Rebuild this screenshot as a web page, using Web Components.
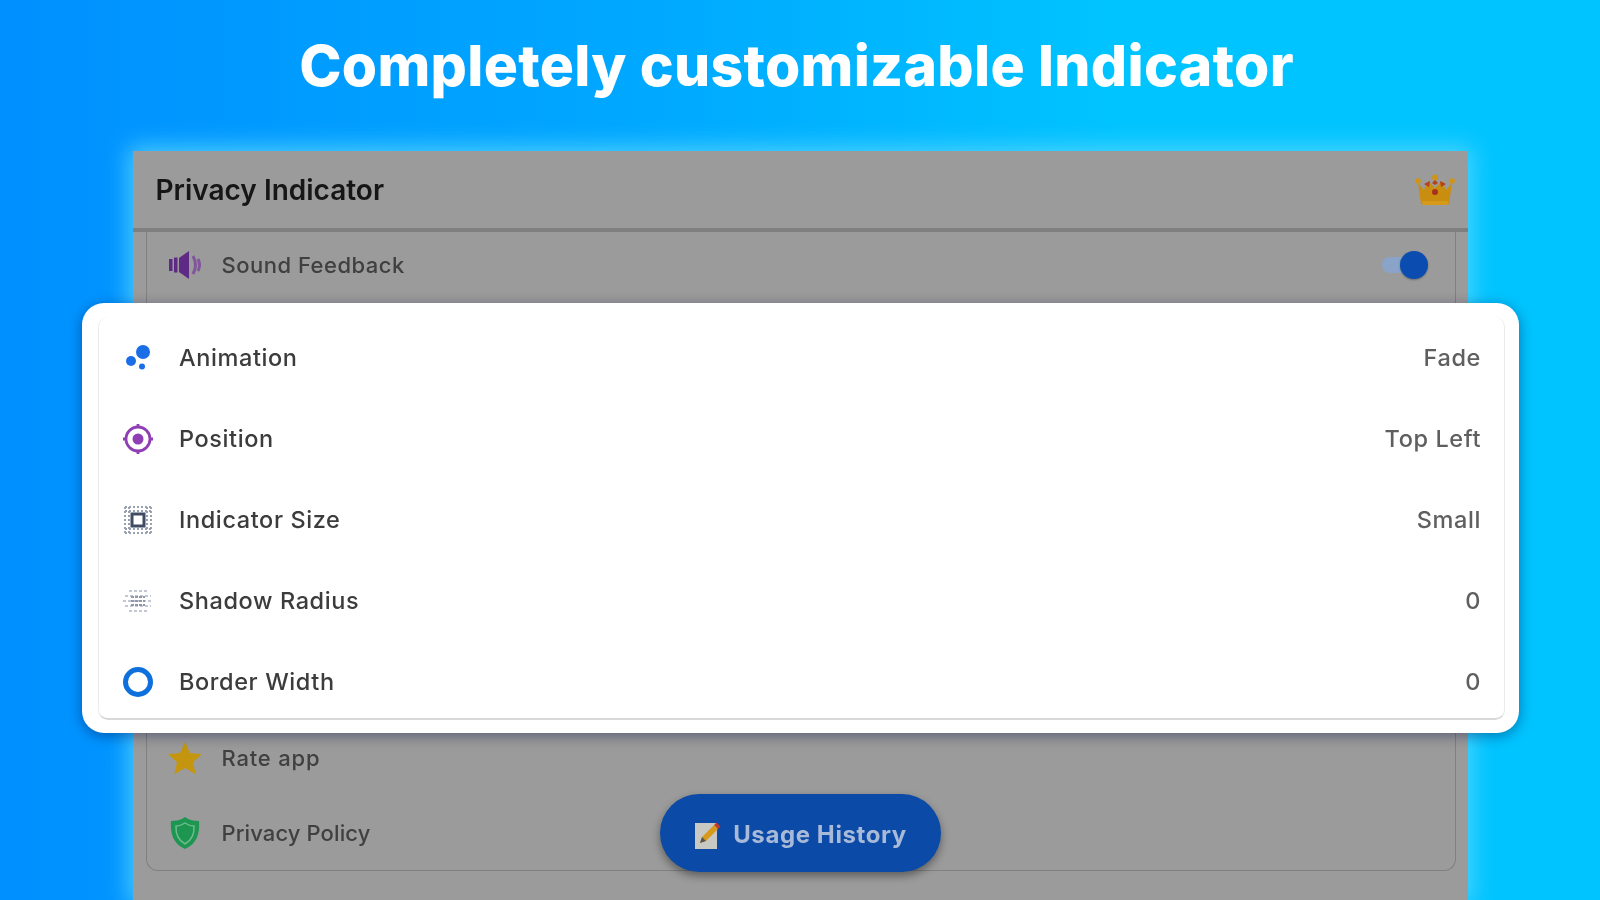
<!DOCTYPE html>
<html lang="en"><head><meta charset="utf-8"><title>Privacy Indicator</title>
<style>html,body{margin:0;padding:0;width:1600px;height:900px;overflow:hidden}</style></head>
<body>
<app-stage>
  <span slot="title">Completely customizable Indicator</span>
  <app-panel slot="panel">
    <span slot="name">Privacy Indicator</span>
    <svg slot="crown" width="40" height="32" viewBox="0 0 40 32"><path d="M3 9l6 7 4-9 7 7 7-7 4 9 6-7-3 21H6z" fill="#c98d10"/><path d="M7 27h26l-.6 4H7.600z" fill="#d79a18"/><circle cx="3" cy="7" r="2.800" fill="#cf9418"/><circle cx="37" cy="7" r="2.800" fill="#cf9418"/><circle cx="20" cy="3.500" r="3" fill="#cf9418"/><path d="M9 10l6-3-1 6zM31 10l-6-3 1 6zM17 9l3-3 3 3-3 2z" fill="#b5401c"/><circle cx="20" cy="18" r="3" fill="#a8301c"/></svg>
    <list-row label="Sound Feedback" style="--row-h:66px;--end:27px">
      <svg slot="icon" width="36" height="30" viewBox="0 0 36 30"><rect x="2" y="9" width="3.500" height="12" fill="#5f2a85"/><rect x="7" y="7.500" width="3.500" height="15" fill="#5f2a85"/><path d="M12 8l10-7v28l-10-7z" fill="#5f2a85"/><path d="M26 6q5 9 0 18M31 9q3 6 0 12" fill="none" stroke="#82569c" stroke-width="3"/></svg>
      <toggle-switch slot="end"></toggle-switch>
    </list-row>
    <row-gap></row-gap>
    <list-row label="Rate app" style="--ls:.8px">
      <svg slot="icon" width="34" height="34" viewBox="0 0 34 34"><path d="M17 1l5 11 12 1.200-9 8 2.700 12L17 27l-10.700 6.200L9 21.200l-9-8L12 12z" fill="#c4960f"/></svg>
    </list-row>
    <list-row label="Privacy Policy" style="--ls:.1px">
      <svg slot="icon" width="32" height="34" viewBox="0 0 32 34"><path d="M16 1c4 3 9 4 14 4 1 12-2 23-14 28C4 28 1 17 2 5c5 0 10-1 14-4z" fill="#1c9650"/><path d="M16 7c3 2 6 3 9 3 .5 8-2 14-9 18-7-4-9.500-10-9-18 3 0 6-1 9-3z" fill="none" stroke="#6fbb8e" stroke-width="1.500"/></svg>
    </list-row>
  </app-panel>
  <settings-popup slot="popup">
    <setting-row label="Animation" value="Fade">
      <svg slot="icon" width="32" height="32" viewBox="0 0 32 32"><circle cx="21" cy="10" r="7" fill="#1a6fe8"/><circle cx="9" cy="19" r="5" fill="#1a6fe8"/><circle cx="20" cy="24.500" r="3" fill="#1a6fe8"/></svg>
    </setting-row>
    <setting-row label="Position" value="Top Left">
      <svg slot="icon" width="32" height="32" viewBox="0 0 32 32"><circle cx="16" cy="16" r="12" fill="none" stroke="#8e3fb4" stroke-width="2.800"/><circle cx="16" cy="16" r="5.500" fill="#8e3fb4"/><path d="M16 1v4M16 27v4M1 16h4M27 16h4" stroke="#8e3fb4" stroke-width="2.800"/></svg>
    </setting-row>
    <setting-row label="Indicator Size" value="Small">
      <svg slot="icon" width="32" height="32" viewBox="0 0 32 32" style="filter:blur(.6px)"><path d="M3 3h26M3 7h26M3 25h26M3 29h26M3 3v26M7 3v26M25 3v26M29 3v26" stroke="#98a1b2" stroke-width="2" stroke-dasharray="2 2"/><rect x="10" y="10" width="12" height="12" fill="#fff" stroke="#414c62" stroke-width="3"/></svg>
    </setting-row>
    <setting-row label="Shadow Radius" value="0">
      <svg slot="icon" width="32" height="32" viewBox="0 0 32 32" style="filter:blur(.6px)"><path d="M7 6h18M3 11h26M1 16h30M3 21h26M7 26h18" stroke="#c3c8d4" stroke-width="1.800" stroke-dasharray="3 2"/><path d="M9 12h14M9 16h14M9 20h14" stroke="#8f98ab" stroke-width="2" stroke-dasharray="3 1"/></svg>
    </setting-row>
    <setting-row label="Border Width" value="0">
      <svg slot="icon" width="32" height="32" viewBox="0 0 32 32"><circle cx="16" cy="16" r="12.500" fill="none" stroke="#0f6fdc" stroke-width="5"/></svg>
    </setting-row>
  </settings-popup>
  <fab-button slot="fab">
    <svg slot="icon" width="28" height="30" viewBox="0 0 28 30"><rect x="1" y="3" width="22" height="26" fill="#c9c9c4"/><path d="M6 23l2-6L20 5l4 4-12 12z" fill="#d99a1c"/><path d="M20 5l2.500-2.500 4 4L24 9z" fill="#c23a2a"/><path d="M6 23l2-6 4 4z" fill="#555"/></svg>
    <span>Usage History</span>
  </fab-button>
</app-stage>
<script>
function def(name, html){
  customElements.define(name, class extends HTMLElement{
    static get observedAttributes(){return ['label','value']}
    constructor(){super();const r=this.attachShadow({mode:'open'});const t=document.createElement('template');t.innerHTML=html;r.appendChild(t.content.cloneNode(true));}
    connectedCallback(){this.sync()}
    attributeChangedCallback(){this.sync()}
    sync(){for(const a of ['label','value']){const n=this.shadowRoot.querySelector('.'+a);if(n)n.textContent=this.getAttribute(a)||''}}
  });
}
def('app-stage',`<style>
:host{display:flex;flex-direction:column;align-items:center;position:relative;width:1600px;height:900px;overflow:hidden;
background:linear-gradient(90deg,#0090ff 0%,#00a8ff 40%,#00c4ff 70%,#00c4ff 100%);font-family:"Inter","Noto Sans",sans-serif}
h1{margin:0;height:151px;box-sizing:border-box;padding:26px 7px 0 0;font:800 57px/80px "Inter",sans-serif;color:#fff;letter-spacing:.3px;white-space:nowrap;filter:blur(.6px)}
.panel{display:flex;flex:1;width:1335px;min-height:0;box-shadow:0 0 22px 4px rgba(90,215,255,.85)}
.popup{position:absolute;left:82px;top:303px}
.fab{position:absolute;left:660px;top:794px}
</style><h1><slot name="title"></slot></h1><div class="panel"><slot name="panel"></slot></div>
<div class="popup"><slot name="popup"></slot></div><div class="fab"><slot name="fab"></slot></div>`);
def('app-panel',`<style>
:host{display:flex;flex-direction:column;flex:1;background:#9b9b9b;color:#333}
header{display:flex;align-items:center;justify-content:space-between;padding:0 13px 0 23px;box-sizing:border-box;flex:none;border-bottom:4px solid #7f7f7f;height:81px;color:#161616;font:600 28px/1 "Inter",sans-serif;filter:blur(.7px)}
.card{margin:0 12px 0 13px;border:1.5px solid #808080;border-top:0;border-radius:0 0 12px 12px;filter:blur(.5px)}
</style><header><slot name="name"></slot><slot name="crown"></slot></header>
<div class="card"><slot></slot></div>`);
def('row-gap',`<style>:host{display:block;height:422px}</style>`);
def('list-row',`<style>
:host{display:flex;align-items:center;height:var(--row-h,75px);padding:0 var(--end,25px) 0 20px;gap:19px;color:#404040;font:500 22px/1 "Inter",sans-serif;letter-spacing:var(--ls,.5px)}
.icon{width:36px;display:flex;justify-content:center;flex:none}.label{flex:1;filter:blur(.4px)}
</style><div class="icon"><slot name="icon"></slot></div><span class="label"></span><slot name="end"></slot>`);
def('toggle-switch',`<style>
:host{display:block;position:relative;width:46px;height:30px}
i{position:absolute;left:0;top:7px;width:36px;height:16px;border-radius:8px;background:#8aa3c8}
b{position:absolute;right:0;top:1px;width:28px;height:28px;border-radius:50%;background:#0b4cb0;box-shadow:0 1px 2px rgba(0,0,0,.3)}
</style><i></i><b></b>`);
def('settings-popup',`<style>
:host{display:block;width:1437px;height:430px;box-sizing:border-box;padding:14px 14px 13px 16px;background:#fff;border-radius:22px;box-shadow:0 3px 14px rgba(0,0,60,.4)}
.card{display:flex;flex-direction:column;height:100%;box-sizing:border-box;border-radius:10px;border-bottom:2px solid #d8d8d8;border-left:1px solid #ebebeb;border-right:1px solid #ebebeb}
</style><div class="card"><slot></slot></div>`);
def('setting-row',`<style>
:host{display:flex;align-items:center;flex:none;height:81px;padding:0 23px 0 22px;gap:24px;color:#3c3c3c;font:500 23.5px/1 "Inter",sans-serif;letter-spacing:.6px}
.icon{width:34px;display:flex;justify-content:center;flex:none;filter:blur(.5px)}.label{flex:1;filter:blur(.7px)}.value{color:#5f5f5f;filter:blur(.7px)}
</style><div class="icon"><slot name="icon"></slot></div><span class="label"></span><span class="value"></span>`);
def('fab-button',`<style>
:host{display:flex;align-items:center;justify-content:center;gap:11px;width:281px;height:78px;box-sizing:border-box;padding-top:3px;border-radius:39px;background:#0b4aa6;color:#a9bad8;font:700 24px/1 "Inter",sans-serif;letter-spacing:.6px;box-shadow:0 4px 8px rgba(0,0,0,.4);filter:blur(.7px)}
</style><slot name="icon"></slot><slot></slot>`);
</script>
</body></html>
